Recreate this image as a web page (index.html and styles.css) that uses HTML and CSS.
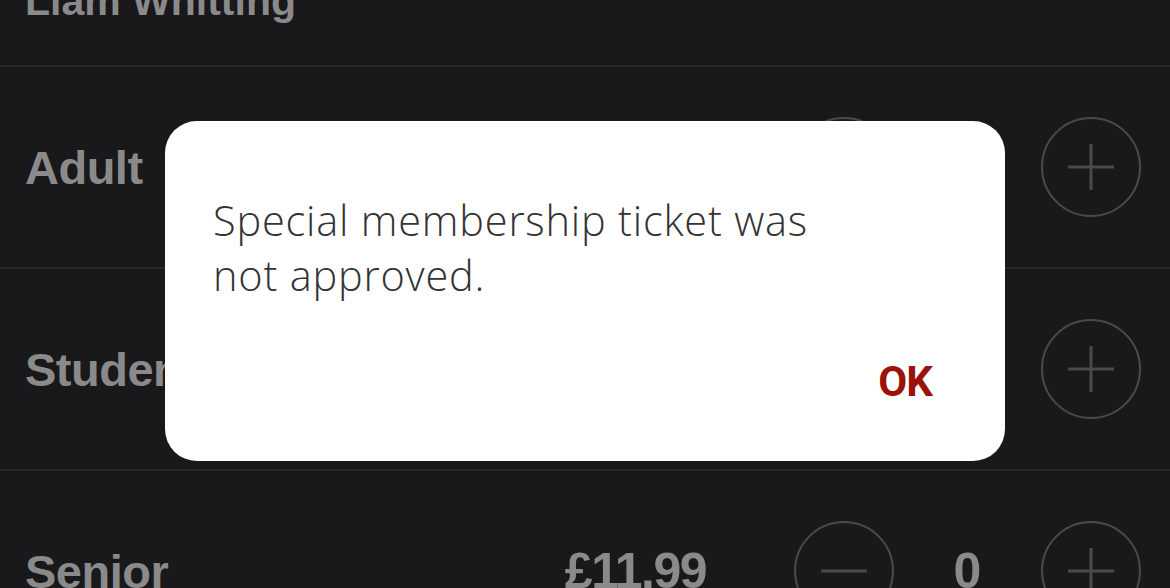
FILE: index.html
```html
<!DOCTYPE html>
<html>
<head>
<meta charset="utf-8">
<link rel="stylesheet" href="styles.css">
</head>
<body>
<div class="screen">
  <div class="header"><span class="name">Liam Whitting</span></div>
  <div class="row">
    <span class="label">Adult</span>
    <div class="controls">
      <span class="price">£11.99</span>
      <div class="counter">
        <span class="circle minus"><svg viewBox="0 0 100 100" width="100" height="100"><circle cx="50" cy="50" r="49" fill="none" stroke="#4a4a4c" stroke-width="2"/><line x1="27" y1="50" x2="73" y2="50" stroke="#4a4a4c" stroke-width="3"/></svg></span>
        <span class="count">0</span>
        <span class="circle plus"><svg viewBox="0 0 100 100" width="100" height="100"><circle cx="50" cy="50" r="49" fill="none" stroke="#4a4a4c" stroke-width="2"/><line x1="27" y1="50" x2="73" y2="50" stroke="#4a4a4c" stroke-width="3"/><line x1="50" y1="27" x2="50" y2="73" stroke="#4a4a4c" stroke-width="3"/></svg></span>
      </div>
    </div>
  </div>
  <div class="row">
    <span class="label">Student</span>
    <div class="controls">
      <span class="price">£9.99</span>
      <div class="counter">
        <span class="circle minus"><svg viewBox="0 0 100 100" width="100" height="100"><circle cx="50" cy="50" r="49" fill="none" stroke="#4a4a4c" stroke-width="2"/><line x1="27" y1="50" x2="73" y2="50" stroke="#4a4a4c" stroke-width="3"/></svg></span>
        <span class="count">0</span>
        <span class="circle plus"><svg viewBox="0 0 100 100" width="100" height="100"><circle cx="50" cy="50" r="49" fill="none" stroke="#4a4a4c" stroke-width="2"/><line x1="27" y1="50" x2="73" y2="50" stroke="#4a4a4c" stroke-width="3"/><line x1="50" y1="27" x2="50" y2="73" stroke="#4a4a4c" stroke-width="3"/></svg></span>
      </div>
    </div>
  </div>
  <div class="row">
    <span class="label">Senior</span>
    <div class="controls">
      <span class="price">£11.99</span>
      <div class="counter">
        <span class="circle minus"><svg viewBox="0 0 100 100" width="100" height="100"><circle cx="50" cy="50" r="49" fill="none" stroke="#4a4a4c" stroke-width="2"/><line x1="27" y1="50" x2="73" y2="50" stroke="#4a4a4c" stroke-width="3"/></svg></span>
        <span class="count">0</span>
        <span class="circle plus"><svg viewBox="0 0 100 100" width="100" height="100"><circle cx="50" cy="50" r="49" fill="none" stroke="#4a4a4c" stroke-width="2"/><line x1="27" y1="50" x2="73" y2="50" stroke="#4a4a4c" stroke-width="3"/><line x1="50" y1="27" x2="50" y2="73" stroke="#4a4a4c" stroke-width="3"/></svg></span>
      </div>
    </div>
  </div>
</div>
<div class="dialog">
  <p class="message">Special membership ticket was<br>not approved.</p>
  <div class="actions"><span class="ok">OK</span></div>
</div>
</body>
</html>
```
FILE: styles.css
```css
html, body {
  margin: 0;
  padding: 0;
  background: #19191b;
  overflow: hidden;
}
.screen {
  width: 1170px;
  height: 588px;
  overflow: hidden;
  font-family: "Liberation Sans", Arial, sans-serif;
  font-weight: 700;
  color: #8a8a8b;
}
.header {
  height: 67px;
  box-sizing: border-box;
  border-bottom: 2px solid #28282a;
  padding: 0 0 39px 25px;
  display: flex;
  align-items: flex-end;
}
.name {
  display: block;
  font-size: 41px;
  line-height: 50px;
}
.row {
  height: 202px;
  box-sizing: border-box;
  border-bottom: 2px solid #28282a;
  display: flex;
  align-items: center;
  justify-content: space-between;
  padding: 0 29px 0 25px;
}
.label {
  font-size: 47px;
  letter-spacing: -0.5px;
}
.controls {
  display: flex;
  align-items: center;
  gap: 88px;
}
.price {
  font-size: 50px;
  letter-spacing: -1.5px;
}
.counter {
  display: flex;
  align-items: center;
}
.circle {
  width: 100px;
  height: 100px;
  display: block;
}
.circle svg { display: block; }
.count {
  width: 147px;
  text-align: center;
  font-size: 50px;
}
.dialog {
  position: absolute;
  left: 165px;
  top: 121px;
  width: 840px;
  height: 340px;
  background: #ffffff;
  border-radius: 32px;
  box-sizing: border-box;
  padding: 72px 73px 0 48px;
  font-family: "Open Sans", "Noto Sans", sans-serif;
}
.message {
  margin: 0;
  font-size: 41.5px;
  line-height: 55px;
  letter-spacing: 0.8px;
  color: #333333;
  font-weight: 300;
}
.actions {
  display: flex;
  justify-content: flex-end;
  margin-top: 54px;
}
.ok {
  font-family: Roboto, "Liberation Sans", sans-serif;
  font-weight: 700;
  font-size: 42px;
  line-height: 50px;
  letter-spacing: -1px;
  color: #9a1208;
}
```
